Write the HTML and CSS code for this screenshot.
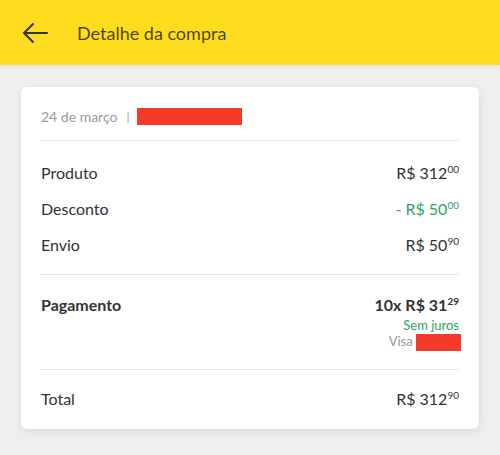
FILE: index.html
```html
<!DOCTYPE html>
<html lang="pt-BR">
<head>
  <meta charset="UTF-8" />
  <title>Detalhe da compra</title>
  <link rel="stylesheet" href="styles.css">
</head>
<body>

  <header class="topbar">
    <svg class="back" width="28" height="22" viewBox="0 0 28 22">
      <path d="M26 11H3M12 2L3 11l9 9" fill="none" stroke="#333" stroke-width="2" stroke-linecap="round" stroke-linejoin="round"/>
    </svg>
    <h1>Detalhe da compra</h1>
  </header>

  <main class="page">
    <div class="card">
      <div class="date">
        <span>24 de março</span>
        <span class="sep">|</span>
        <span class="redact redact-id"></span>
      </div>

      <div class="rows">
        <div class="row">
          <span>Produto</span>
          <span class="price">R$ 312<sup>00</sup></span>
        </div>
        <div class="row">
          <span>Desconto</span>
          <span class="price green">- R$ 50<sup>00</sup></span>
        </div>
        <div class="row">
          <span>Envio</span>
          <span class="price">R$ 50<sup>90</sup></span>
        </div>
      </div>

      <div class="payment">
        <span class="label">Pagamento</span>
        <div class="pay-info">
          <span class="price bold">10x R$ 31<sup>29</sup></span>
          <span class="no-interest">Sem juros</span>
          <span class="card-brand">Visa <span class="redact redact-card"></span></span>
        </div>
      </div>

      <div class="total">
        <span>Total</span>
        <span class="price">R$ 312<sup>90</sup></span>
      </div>
    </div>
  </main>

</body>
</html>
```

FILE: styles.css
```css
* {
  margin: 0;
  padding: 0;
  box-sizing: border-box;
}
html, body {
  width: 100%;
  height: 100%;
  background-color: #efefef;
  font-family: 'Lato', sans-serif;
  color: #333;
  overflow: hidden;
}
.topbar {
  height: 65px;
  background: #fddd1d;
  display: flex;
  align-items: center;
  padding-left: 21px;
  box-shadow: 0 1px 3px rgba(0, 0, 0, 0.08);
}
.topbar .back {
  margin-top: 1px;
}
.topbar h1 {
  margin-left: 28px;
  font-size: 18px;
  font-weight: 400;
  color: rgba(0, 0, 0, 0.72);
}
.page {
  padding: 22px 21px 0 21px;
}
.card {
  background: #fff;
  border-radius: 6px;
  padding: 0 20px;
  box-shadow: 0 2px 8px rgba(0, 0, 0, 0.1);
}
.date {
  display: flex;
  align-items: center;
  padding: 21px 0 15px;
  font-size: 14px;
  color: #999;
  border-bottom: 1px solid #e6e6e6;
}
.date .sep {
  margin: 0 8px 0 9px;
  font-size: 12px;
}
.redact {
  display: inline-block;
  background: #f43b2a;
}
.redact-id {
  width: 105px;
  height: 17px;
}
.redact-card {
  width: 45px;
  height: 17px;
  vertical-align: middle;
}
.rows {
  padding: 13px 0 12px;
  border-bottom: 1px solid #e6e6e6;
}
.row {
  height: 36px;
  display: flex;
  align-items: center;
  justify-content: space-between;
  font-size: 16px;
}
.price sup {
  font-size: 10px;
  line-height: 0;
  vertical-align: baseline;
  position: relative;
  top: -6px;
}
.green {
  color: #2ba466;
}
.payment {
  display: flex;
  justify-content: space-between;
  padding: 20px 0 18px;
  border-bottom: 1px solid #e6e6e6;
}
.payment .label {
  font-size: 16px;
  font-weight: 700;
  line-height: 20px;
}
.pay-info {
  display: flex;
  flex-direction: column;
  align-items: flex-end;
}
.bold {
  font-weight: 700;
  font-size: 16px;
  line-height: 20px;
}
.no-interest {
  margin-top: 2px;
  font-size: 13px;
  line-height: 16px;
  color: #2ba466;
}
.card-brand {
  font-size: 13px;
  line-height: 17px;
  color: #999;
  margin-right: -2px;
}
.total {
  display: flex;
  justify-content: space-between;
  align-items: center;
  padding: 19px 0 20px;
  line-height: 20px;
  font-size: 16px;
}
```
